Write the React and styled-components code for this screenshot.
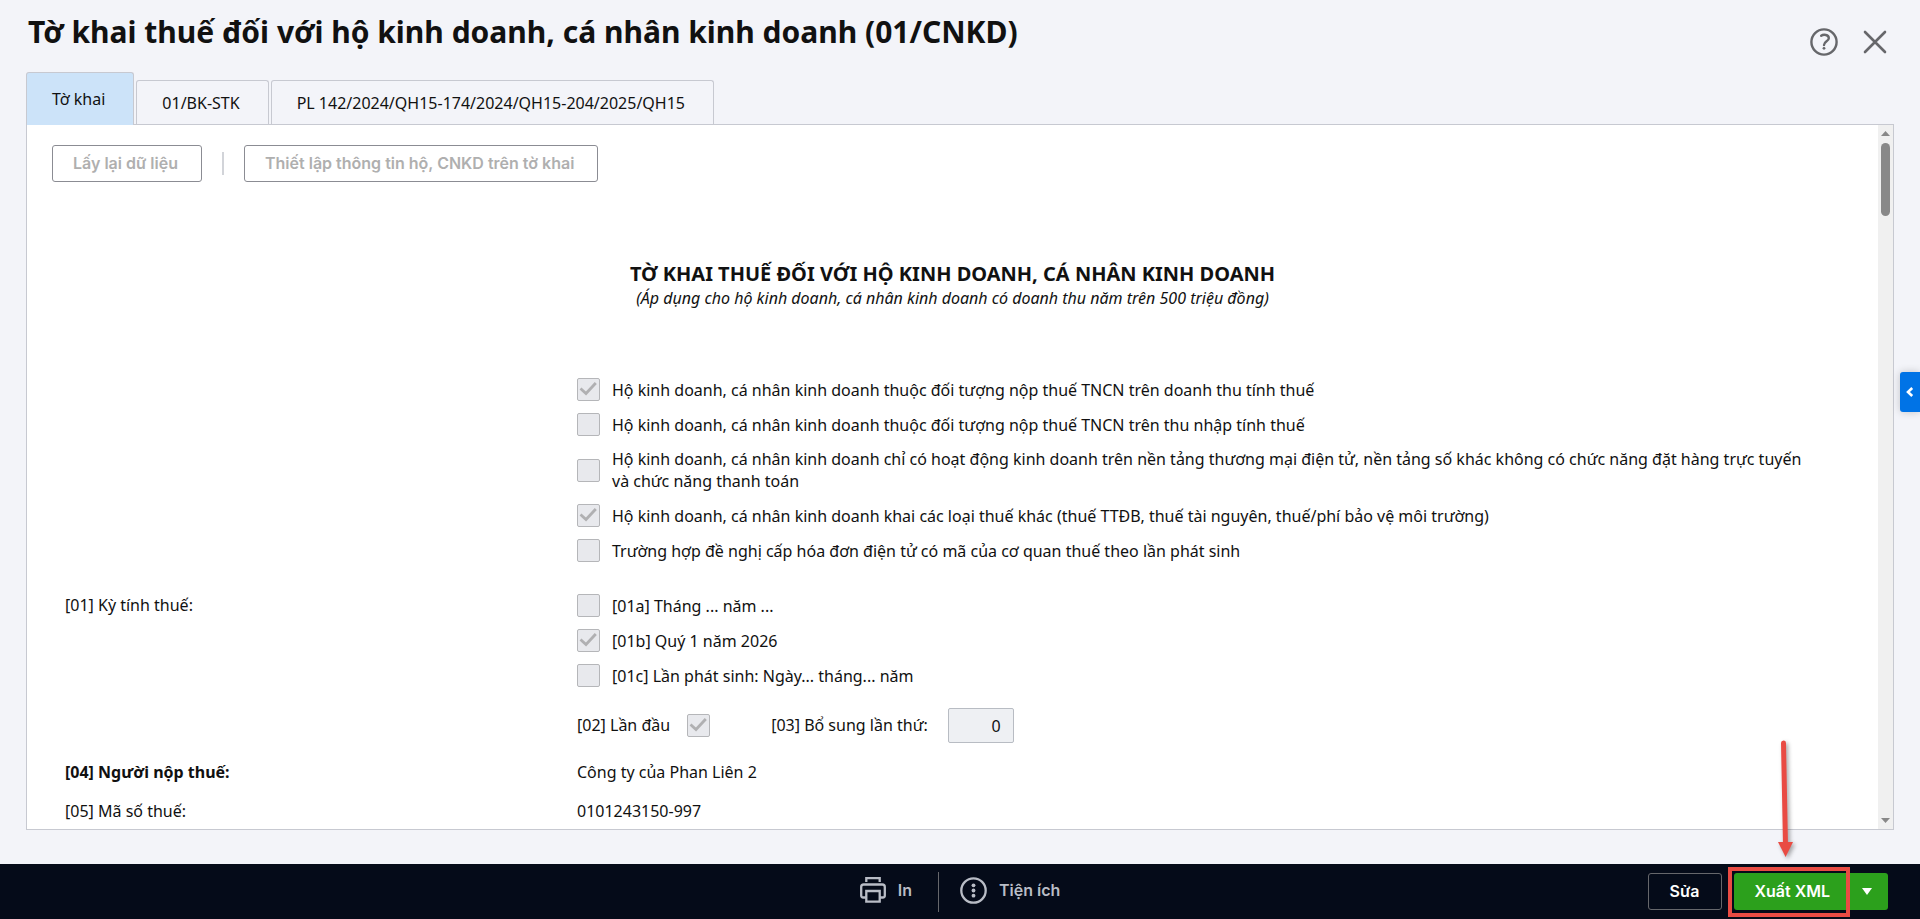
import React, { useState } from "react";
import styled, { createGlobalStyle } from "styled-components";

const GlobalStyle = createGlobalStyle`
    * {
        box-sizing: border-box;
    }

    body {
        margin: 0;
        background: #f3f4f9;
        color: #111111;
        font-family: "Noto Sans", "Open Sans", sans-serif;
        font-size: 16px;
        line-height: 22px;
    }

    button, input {
        font: inherit;
        color: inherit;
    }
`;

const Page = styled.div`
    display: flex;
    flex-direction: column;
    height: 100vh;
`;

const Header = styled.header`
    display: flex;
    justify-content: space-between;
    align-items: flex-start;
    height: 72px;
    flex: none;
    padding: 12px 32px 0 28px;
`;

const Title = styled.h1`
    margin: 0;
    font-size: 30px;
    line-height: 40px;
    font-weight: 700;
`;

const HeaderActions = styled.div`
    display: flex;
    gap: 24px;
    padding-top: 16px;
`;

const IconButton = styled.button`
    display: flex;
    padding: 0;
    border: 0;
    background: none;
    color: #66676b;
    cursor: pointer;
`;

const Main = styled.main`
    display: flex;
    flex-direction: column;
    flex: 1;
    min-height: 0;
    padding: 0 26px 34px;
`;

const Tabs = styled.div`
    display: flex;
    align-items: flex-end;
    gap: 2px;
    flex: none;
    height: 52px;
`;

const Tab = styled.button`
    height: ${props => props.$active ? "53px" : "44px"};
    margin-bottom: ${props => props.$active ? "-1px" : "0"};
    padding: 0 28px 0 25px;
    border: 1px solid #c7c9d1;
    border-bottom: 0;
    border-radius: 3px 3px 0 0;
    background: ${props => props.$active ? "#cce3f9" : "transparent"};
    z-index: 1;
    cursor: pointer;
`;

const Panel = styled.section`
    display: flex;
    flex: 1;
    min-height: 0;
    border: 1px solid #c7c9d1;
    background: #ffffff;
`;

const Content = styled.div`
    flex: 1;
    min-width: 0;
    overflow-y: auto;
    scrollbar-width: none;
`;

const ScrollBar = styled.div`
    display: flex;
    flex-direction: column;
    align-items: center;
    justify-content: space-between;
    width: 15px;
    padding: 6px 0;
    background: #f0f0f0;
`;

const ScrollTop = styled.div`
    display: grid;
    gap: 7px;
`;

const ScrollThumb = styled.div`
    width: 9px;
    height: 73px;
    border-radius: 5px;
    background: #888888;
`;

const Toolbar = styled.div`
    display: flex;
    align-items: center;
    gap: 20px;
    padding: 20px 25px 0;
`;

const OutlineButton = styled.button`
    height: 37px;
    padding: 0 23px 2px 20px;
    border: 1px solid #8b8c93;
    border-radius: 3px;
    background: #ffffff;
    color: #afafaf;
    font-family: Inter, sans-serif;
    font-weight: 600;
`;

const ToolbarLine = styled.span`
    width: 2px;
    height: 23px;
    background: #d2d4d9;
`;

const FormHead = styled.div`
    padding: 79px 0 69px;
    text-align: center;
`;

const FormTitle = styled.h2`
    margin: 0;
    font-size: 20px;
    line-height: 26px;
    font-weight: 700;
`;

const FormNote = styled.em`
    display: block;
`;

const FormBody = styled.div`
    display: grid;
    grid-template-columns: 512px 1fr;
    padding: 0 62px 40px 38px;
`;

const Cell = styled.div`
    padding-bottom: ${props => props.$space || "0"};
    line-height: 23px;
    font-weight: ${props => props.$bold ? 700 : 400};
`;

const Checks = styled(Cell)`
    display: flex;
    flex-direction: column;
    gap: 12px;
    line-height: 22px;
`;

const CheckLabel = styled.label`
    display: grid;
    grid-template-columns: 23px 1fr;
    align-items: center;
    gap: 12px;
    min-height: 23px;
`;

const BoxWrap = styled.span`
    display: grid;
    width: 23px;
    height: 23px;

    > * {
        grid-area: 1 / 1;
    }
`;

const Box = styled.input`
    appearance: none;
    width: 23px;
    height: 23px;
    margin: 0;
    border: 1px solid #b5b6b9;
    border-radius: 2px;
    background: #e8e9ed;
`;

const Inline = styled(Cell)`
    display: flex;
    align-items: center;
`;

const FirstLabel = styled.label`
    display: flex;
    align-items: center;
    gap: 17px;
    margin-right: 61px;
`;

const NumberLabel = styled.label`
    display: flex;
    align-items: center;
    gap: 20px;
`;

const NumberInput = styled.input`
    width: 66px;
    height: 35px;
    padding: 0 12px;
    border: 1px solid #b8bcc3;
    border-radius: 2px;
    background: #eef0f3;
    text-align: right;
`;

const Footer = styled.footer`
    display: grid;
    grid-template-columns: 1fr auto 1fr;
    align-items: center;
    flex: none;
    height: 55px;
    padding: 0 32px;
    background: #050b19;
    font-family: Inter, sans-serif;
    font-weight: 600;
`;

const FooterTools = styled.div`
    display: flex;
    align-items: center;
    grid-column: 2;
`;

const FooterTool = styled.button`
    display: flex;
    align-items: center;
    gap: 12px;
    padding: 0 0 3px;
    border: 0;
    background: none;
    color: #b9bdc6;
    cursor: pointer;
`;

const FooterLine = styled.span`
    width: 1px;
    height: 40px;
    margin: 0 21px 0 26px;
    background: #66676b;
`;

const FooterActions = styled.div`
    display: flex;
    justify-content: flex-end;
    gap: 12px;
    color: #ffffff;
`;

const EditButton = styled.button`
    height: 37px;
    padding: 0 21px 2px;
    border: 1px solid #66676b;
    border-radius: 3px;
    background: none;
    cursor: pointer;
`;

const SplitButton = styled.div`
    display: flex;
    position: relative;
`;

const ExportButton = styled.button`
    height: 37px;
    padding: 0 16px 2px 21px;
    border: 0;
    border-radius: 3px 0 0 3px;
    background: #2ca01c;
    cursor: pointer;
`;

const ExportMenu = styled.button`
    display: flex;
    align-items: center;
    justify-content: center;
    width: 42px;
    padding: 0;
    border: 0;
    border-radius: 0 3px 3px 0;
    background: #2ca01c;
    cursor: pointer;
`;

const Frame = styled.div`
    position: absolute;
    top: -6px;
    left: -6px;
    right: 38px;
    height: 50px;
    border: 4px solid #e94b43;
    pointer-events: none;
`;

const Arrow = styled.svg`
    position: absolute;
    left: 38px;
    bottom: 53px;
    filter: drop-shadow(2px 2px 2px rgba(0, 0, 0, 0.35));
    pointer-events: none;
`;

const SideTab = styled.button`
    position: fixed;
    top: 372px;
    right: 0;
    display: flex;
    align-items: center;
    justify-content: center;
    width: 20px;
    height: 40px;
    padding: 0;
    border: 0;
    border-radius: 3px 0 0 3px;
    background: #0073e6;
    box-shadow: 0 0 8px rgba(0, 0, 0, 0.2);
    cursor: pointer;
`;

const tabs = ["Tờ khai", "01/BK-STK", "PL 142/2024/QH15-174/2024/QH15-204/2025/QH15"];

const subjects = [
    { text: "Hộ kinh doanh, cá nhân kinh doanh thuộc đối tượng nộp thuế TNCN trên doanh thu tính thuế", checked: true },
    { text: "Hộ kinh doanh, cá nhân kinh doanh thuộc đối tượng nộp thuế TNCN trên thu nhập tính thuế" },
    { text: "Hộ kinh doanh, cá nhân kinh doanh chỉ có hoạt động kinh doanh trên nền tảng thương mại điện tử, nền tảng số khác không có chức năng đặt hàng trực tuyến và chức năng thanh toán" },
    { text: "Hộ kinh doanh, cá nhân kinh doanh khai các loại thuế khác (thuế TTĐB, thuế tài nguyên, thuế/phí bảo vệ môi trường)", checked: true },
    { text: "Trường hợp đề nghị cấp hóa đơn điện tử có mã của cơ quan thuế theo lần phát sinh" },
];

const periods = [
    { text: "[01a] Tháng ... năm ..." },
    { text: "[01b] Quý 1 năm 2026", checked: true },
    { text: "[01c] Lần phát sinh: Ngày... tháng... năm" },
];

const CheckBox = ({ checked }) => (
    <BoxWrap>
        <Box type="checkbox" checked={!!checked} disabled readOnly />
        {checked && (
            <svg width="23" height="23" viewBox="0 0 23 23" fill="none" stroke="#b0b0b2" strokeWidth="2.8">
                <path d="M3.5 10.5 9 15.5 18.8 5" />
            </svg>
        )}
    </BoxWrap>
);

const CheckList = ({ items, space }) => (
    <Checks $space={space}>
        {items.map(item => (
            <CheckLabel key={item.text}>
                <CheckBox checked={item.checked} />
                <span>{item.text}</span>
            </CheckLabel>
        ))}
    </Checks>
);

const App = () => {
    const [current, setCurrent] = useState(0);

    return (
        <Page>
            <GlobalStyle />
            <Header>
                <Title>Tờ khai thuế đối với hộ kinh doanh, cá nhân kinh doanh (01/CNKD)</Title>
                <HeaderActions>
                    <IconButton aria-label="Trợ giúp">
                        <svg width="28" height="28" viewBox="0 0 28 28" fill="none" stroke="currentColor" strokeWidth="2.4" strokeLinecap="round">
                            <circle cx="14" cy="14" r="12.6" />
                            <path d="M11.2 7.8C13.5 6.1 18.8 6.6 18.8 10.2C18.8 13.4 14 13.2 14 17" />
                            <circle cx="14" cy="20.3" r="1.4" fill="currentColor" stroke="none" />
                        </svg>
                    </IconButton>
                    <IconButton aria-label="Đóng">
                        <svg width="26" height="28" viewBox="0 0 26 28" fill="none" stroke="currentColor" strokeWidth="2.6" strokeLinecap="round">
                            <path d="M3 4 23 24M23 4 3 24" />
                        </svg>
                    </IconButton>
                </HeaderActions>
            </Header>
            <Main>
                <Tabs role="tablist">
                    {tabs.map((tab, i) => (
                        <Tab key={tab} role="tab" aria-selected={i === current} $active={i === current} onClick={() => setCurrent(i)}>
                            {tab}
                        </Tab>
                    ))}
                </Tabs>
                <Panel>
                    <Content>
                        <Toolbar>
                            <OutlineButton disabled>Lấy lại dữ liệu</OutlineButton>
                            <ToolbarLine />
                            <OutlineButton disabled>Thiết lập thông tin hộ, CNKD trên tờ khai</OutlineButton>
                        </Toolbar>
                        <FormHead>
                            <FormTitle>TỜ KHAI THUẾ ĐỐI VỚI HỘ KINH DOANH, CÁ NHÂN KINH DOANH</FormTitle>
                            <FormNote>(Áp dụng cho hộ kinh doanh, cá nhân kinh doanh có doanh thu năm trên 500 triệu đồng)</FormNote>
                        </FormHead>
                        <FormBody>
                            <Cell />
                            <CheckList items={subjects} space="32px" />
                            <Cell>[01] Kỳ tính thuế:</Cell>
                            <CheckList items={periods} space="21px" />
                            <Cell />
                            <Inline $space="18px">
                                <FirstLabel>
                                    [02] Lần đầu
                                    <CheckBox checked />
                                </FirstLabel>
                                <NumberLabel>
                                    [03] Bổ sung lần thứ:
                                    <NumberInput value="0" disabled readOnly />
                                </NumberLabel>
                            </Inline>
                            <Cell $bold $space="16px">[04] Người nộp thuế:</Cell>
                            <Cell>Công ty của Phan Liên 2</Cell>
                            <Cell>[05] Mã số thuế:</Cell>
                            <Cell>0101243150-997</Cell>
                        </FormBody>
                    </Content>
                    <ScrollBar aria-hidden="true">
                        <ScrollTop>
                            <svg width="9" height="5" viewBox="0 0 9 5" fill="#888888"><path d="M0 5 4.5 0 9 5z" /></svg>
                            <ScrollThumb />
                        </ScrollTop>
                        <svg width="9" height="5" viewBox="0 0 9 5" fill="#888888"><path d="M0 0 4.5 5 9 0z" /></svg>
                    </ScrollBar>
                </Panel>
            </Main>
            <Footer>
                <FooterTools>
                    <FooterTool>
                        <svg width="26" height="26" viewBox="0 0 26 26" fill="none" stroke="currentColor" strokeWidth="2.3">
                            <path d="M6.3 5V1.2H19.7V5" />
                            <path d="M6 20.5H3.2Q1.2 20.5 1.2 18.5V10Q1.2 7.5 3.7 7.5H22.3Q24.8 7.5 24.8 10V18.5Q24.8 20.5 22.8 20.5H20" />
                            <path d="M6.3 14H19.7V24.7H6.3z" />
                        </svg>
                        In
                    </FooterTool>
                    <FooterLine />
                    <FooterTool>
                        <svg width="27" height="27" viewBox="0 0 27 27" fill="none" stroke="currentColor" strokeWidth="2.3">
                            <circle cx="13.5" cy="13.5" r="12.2" />
                            <g fill="currentColor" stroke="none">
                                <circle cx="13.5" cy="8.3" r="1.9" />
                                <circle cx="13.5" cy="13.5" r="1.9" />
                                <circle cx="13.5" cy="18.7" r="1.9" />
                            </g>
                        </svg>
                        Tiện ích
                    </FooterTool>
                </FooterTools>
                <FooterActions>
                    <EditButton>Sửa</EditButton>
                    <SplitButton>
                        <ExportButton>Xuất XML</ExportButton>
                        <ExportMenu aria-label="Tùy chọn xuất">
                            <svg width="10" height="7" viewBox="0 0 10 7" fill="#ffffff"><path d="M0 0H10L5 7z" /></svg>
                        </ExportMenu>
                        <Frame />
                        <Arrow width="24" height="124" viewBox="0 0 24 124" fill="#e94b43">
                            <path d="M11.5 10 13.5 112" stroke="#e94b43" strokeWidth="5" strokeLinecap="round" />
                            <path d="M6 109 21 109 13.6 124z" />
                        </Arrow>
                    </SplitButton>
                </FooterActions>
            </Footer>
            <SideTab aria-label="Mở bảng bên">
                <svg width="8" height="10" viewBox="0 0 8 10" fill="none" stroke="#ffffff" strokeWidth="2.6"><path d="M6.2 1 2 5 6.2 9" /></svg>
            </SideTab>
        </Page>
    );
};

export default App;
